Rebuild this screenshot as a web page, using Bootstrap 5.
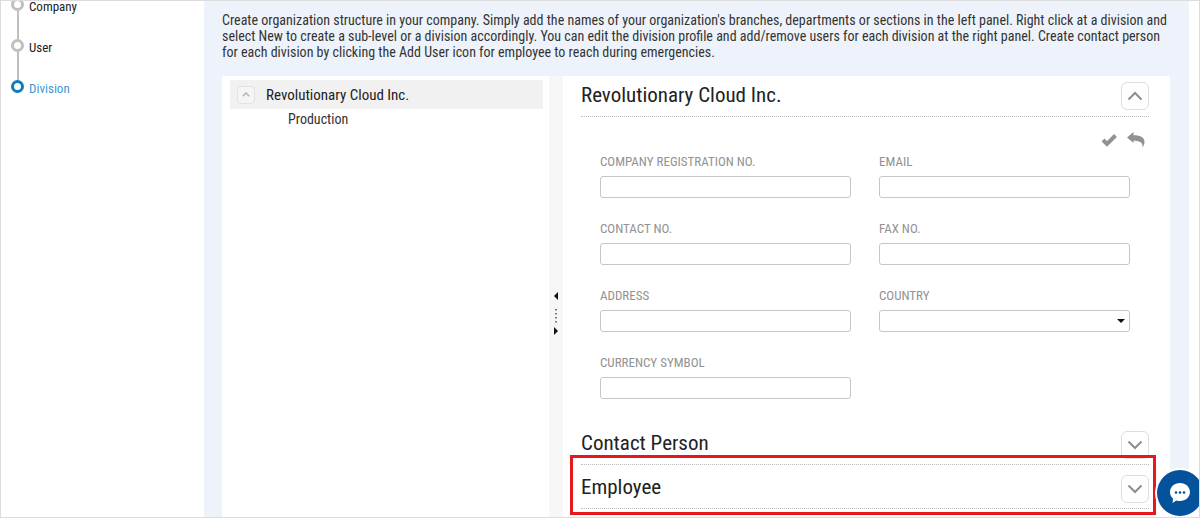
<!DOCTYPE html>
<html lang="en">
<head>
<meta charset="utf-8">
<meta name="viewport" content="width=device-width, initial-scale=1">
<title>Division setup</title>
<link href="https://cdn.jsdelivr.net/npm/bootstrap@5.3.0/dist/css/bootstrap.min.css" rel="stylesheet">
<style>
body{font-family:"Roboto Condensed","Open Sans Condensed","Liberation Sans",sans-serif;font-size:14px;line-height:16px;color:#333;background:#fff}
.page-frame{border:1px solid #dcdcdc;min-height:100vh}
.wizard{width:203px}
.step-list{margin-top:-15px}
.step-list li{height:41px;padding-left:28px;font-size:13px;line-height:41px}
.step-list a{color:#222}
.step-list .current a{color:#4298d3}
.step-list li+li::before{content:"";position:absolute;left:16px;top:-16px;width:2px;height:28px;background:#bfbfbf}
.step-list li::after{content:"";position:absolute;left:10px;top:12px;width:13px;height:13px;border:3px solid #bfbfbf;border-radius:50%}
.step-list .current::after{border-color:#0b7dbd}
.workspace{background:#eef3fb;padding:11px 19px 0 18px;margin-right:10px}
.intro{margin-bottom:16px}
.tree-panel{flex:0 0 327px;padding:4px 6px 0 8px}
.tree-root{background:#f1f1f1;height:29px;font-size:15px;padding:0 7px;gap:11px;color:#222}
.tree-child{padding-left:58px;line-height:20px}
.tree-toggle{width:18px;height:18px;border:1px solid #e2e2e2;border-radius:4px;background:#f5f5f5}
.splitter{flex:0 0 14px;background:#f7f7f7;padding-top:215px}
.detail-panel{padding:0 21px 0 18px}
.section-bar{border-bottom:1px dotted #bbb;height:41px}
.section-bar h2{font-size:21px;font-weight:400;line-height:24px;color:#222;padding-bottom:2px}
.section-low{height:44px;padding-top:4px}
.section-low h2{padding-bottom:4px}
.toggle{width:28px;height:28px;border:1px solid #dedede;border-radius:6px;background:#fff}
.toolbar{height:37px;padding:9px 4px 0 0;gap:10px}
.fields{padding:0 19px;display:grid;grid-template-columns:1fr 1fr;column-gap:28px;row-gap:23px;margin-bottom:22px}
.fields label{display:block;font-size:13px;line-height:16px;color:#929292;margin-bottom:6px}
.fields .form-control,.fields .form-select{height:22px;min-height:22px;border:1px solid #c6c6c6;border-radius:3px;padding:0 6px;font-size:13px}
.fields .form-select{background-image:url("data:image/svg+xml,%3Csvg xmlns='http://www.w3.org/2000/svg' viewBox='0 0 8 4'%3E%3Cpath d='M0 0h8L4 4z' fill='%23111'/%3E%3C/svg%3E");background-size:8px 4px;background-position:right 4px center}
.callout-box{position:absolute;inset:-10px -7px -7px -11px;border:3px solid #e5171f;pointer-events:none}
.chat{position:absolute;right:-4px;bottom:1px;width:46px;height:46px;background:#05529c;box-shadow:0 0 0 2px #fff}
</style>
</head>
<body>
<div class="page-frame d-flex position-relative overflow-hidden">
  <nav class="wizard flex-shrink-0" aria-label="Setup steps">
    <ol class="step-list list-unstyled mb-0">
      <li class="position-relative"><a class="text-decoration-none" href="#company">Company</a></li>
      <li class="position-relative"><a class="text-decoration-none" href="#user">User</a></li>
      <li class="position-relative current"><a class="text-decoration-none" href="#division" aria-current="step">Division</a></li>
    </ol>
  </nav>
  <main class="workspace flex-grow-1 d-flex flex-column">
    <p class="intro">Create organization structure in your company. Simply add the names of your organization's branches, departments or sections in the left panel. Right click at a division and select New to create a sub-level or a division accordingly. You can edit the division profile and add/remove users for each division at the right panel. Create contact person for each division by clicking the Add User icon for employee to reach during emergencies.</p>
    <div class="d-flex flex-grow-1 bg-white">
      <aside class="tree-panel">
        <div class="tree-root d-flex align-items-center">
          <button type="button" class="tree-toggle p-0 d-flex align-items-center justify-content-center" aria-label="Collapse"><svg width="8" height="5" viewBox="0 0 8 5" fill="none" stroke="#b5b5b5" stroke-width="1.5"><path d="M.7 4.3 4 1l3.3 3.3"/></svg></button>
          <span>Revolutionary Cloud Inc.</span>
        </div>
        <div class="tree-child">Production</div>
      </aside>
      <div class="splitter text-center"><svg width="6" height="44" viewBox="0 0 6 44"><path d="M5 1v8L1 5zM1 36v8l4-4z" fill="#111"/><path d="M2 18h2v1.500H2zM2 22h2v1.500H2zM2 26h2v1.500H2zM2 30h2v1.500H2z" fill="#777"/></svg></div>
      <div class="detail-panel flex-grow-1">
        <section>
          <div class="section-bar d-flex justify-content-between align-items-center">
            <h2 class="m-0">Revolutionary Cloud Inc.</h2>
            <button type="button" class="toggle p-0 d-flex align-items-center justify-content-center" aria-label="Collapse section"><svg width="16" height="10" viewBox="0 0 16 10" fill="none" stroke="#8e8e8e" stroke-width="2"><path d="M1.500 8.500 8 2l6.500 6.500"/></svg></button>
          </div>
          <div class="toolbar d-flex justify-content-end align-items-center">
            <button type="button" class="btn p-0 border-0 d-flex" aria-label="Save"><svg width="16" height="16" viewBox="0 0 16 16" fill="none" stroke="#929292" stroke-width="4"><path d="m2 8 4 4 8.500-8.500"/></svg></button>
            <button type="button" class="btn p-0 border-0 d-flex" aria-label="Undo"><svg width="18" height="16" viewBox="0 0 18 16" fill="#929292"><path d="M0 5.500 6.500 0v3.200c7.500 0 11 2.300 11 6.800 0 2.200-.8 4-2 5.500.7-4.600-2-6.700-9-6.700V11z"/></svg></button>
          </div>
          <form class="fields">
            <div><label for="reg">COMPANY REGISTRATION NO.</label><input id="reg" class="form-control" type="text"></div>
            <div><label for="mail">EMAIL</label><input id="mail" class="form-control" type="email"></div>
            <div><label for="tel">CONTACT NO.</label><input id="tel" class="form-control" type="tel"></div>
            <div><label for="fax">FAX NO.</label><input id="fax" class="form-control" type="tel"></div>
            <div><label for="addr">ADDRESS</label><input id="addr" class="form-control" type="text"></div>
            <div><label for="country">COUNTRY</label><select id="country" class="form-select"><option></option></select></div>
            <div><label for="cur">CURRENCY SYMBOL</label><input id="cur" class="form-control" type="text"></div>
          </form>
        </section>
        <section class="section-bar section-low d-flex justify-content-between align-items-center">
          <h2 class="m-0">Contact Person</h2>
          <button type="button" class="toggle p-0 d-flex align-items-center justify-content-center" aria-label="Expand contact person"><svg width="16" height="10" viewBox="0 0 16 10" fill="none" stroke="#8e8e8e" stroke-width="2"><path d="M1.500 1.500 8 8l6.500-6.500"/></svg></button>
        </section>
        <section class="section-bar section-low d-flex justify-content-between align-items-center position-relative">
          <h2 class="m-0">Employee</h2>
          <button type="button" class="toggle p-0 d-flex align-items-center justify-content-center" aria-label="Expand employee"><svg width="16" height="10" viewBox="0 0 16 10" fill="none" stroke="#8e8e8e" stroke-width="2"><path d="M1.500 1.500 8 8l6.500-6.500"/></svg></button>
          <div class="callout-box"></div>
        </section>
      </div>
    </div>
  </main>
  <button type="button" class="chat btn p-0 border-0 rounded-circle d-flex align-items-center justify-content-center" aria-label="Chat"><svg width="22" height="22" viewBox="0 0 22 22"><path d="M11 1c5.600 0 10 3.900 10 9s-4.400 9-10 9c-1.300 0-2.600-.2-3.700-.6L3.500 21l.6-4.300C2.200 15.100 1 12.700 1 10c0-5.100 4.400-9 10-9z" fill="#fff"/><g fill="#05529c"><circle cx="7" cy="10.500" r="1.300"/><circle cx="11" cy="10.500" r="1.300"/><circle cx="15" cy="10.500" r="1.300"/></g></svg></button>
</div>
<script src="https://cdn.jsdelivr.net/npm/bootstrap@5.3.0/dist/js/bootstrap.bundle.min.js"></script>
</body>
</html>
